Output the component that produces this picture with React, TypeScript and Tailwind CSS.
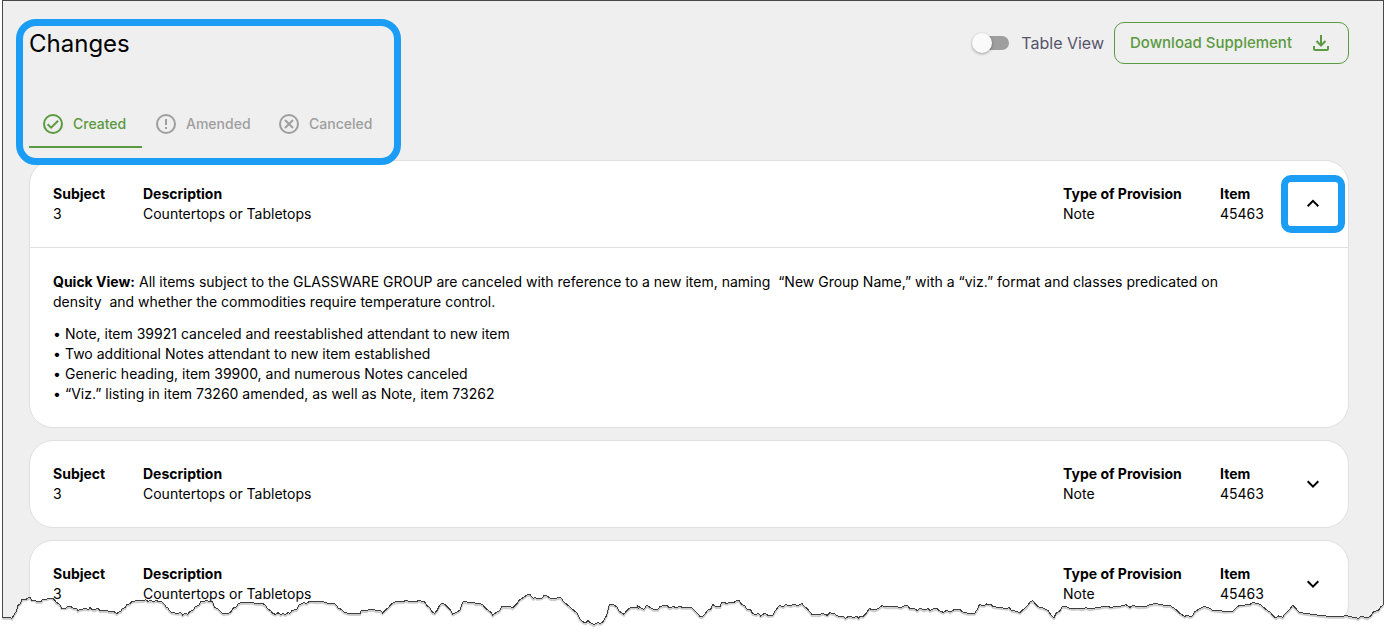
import { useState } from "react";

type Tab = "Created" | "Amended" | "Canceled";

const tabs: Tab[] = ["Created", "Amended", "Canceled"];

const bullets = [
  "Note, item 39921 canceled and reestablished attendant to new item",
  "Two additional Notes attendant to new item established",
  "Generic heading, item 39900, and numerous Notes canceled",
  "“Viz.” listing in item 73260 amended, as well as Note, item 73262",
];

const tabMarks: Record<Tab, string> = {
  Created: "M6.6 12.2l3.5 3.5 7-7",
  Amended: "M12 7v6M12 15v2",
  Canceled: "M8 8l8 8M16 8l-8 8",
};

const tabWidths: Record<Tab, string> = {
  Created: "w-[113px]",
  Amended: "w-[123px]",
  Canceled: "w-[123px]",
};

function TabIcon({ tab }: { tab: Tab }) {
  return (
    <svg viewBox="0 0 24 24" className="size-6" fill="none" stroke="currentColor" strokeWidth="2" aria-hidden="true">
      <circle cx="12" cy="12" r="9" />
      <path d={tabMarks[tab]} />
    </svg>
  );
}

function Field({ label, value, className }: { label: string; value: string; className: string }) {
  return (
    <div className={className}>
      <dt className="font-bold">{label}</dt>
      <dd>{value}</dd>
    </div>
  );
}

function Card({ initiallyOpen = false, highlighted = false }: { initiallyOpen?: boolean; highlighted?: boolean }) {
  const [open, setOpen] = useState(initiallyOpen);
  return (
    <article className="rounded-3xl border border-[#e0e0e0] bg-white text-sm leading-5 text-black">
      <div className="flex items-center py-[23px] pl-[23px]">
        <dl className="flex flex-1">
          <Field label="Subject" value="3" className="w-[90px]" />
          <Field label="Description" value="Countertops or Tabletops" className="flex-1" />
          <Field label="Type of Provision" value="Note" className="w-[157px]" />
          <Field label="Item" value="45463" className="w-[61px]" />
        </dl>
        <button
          type="button"
          aria-label={open ? "Collapse" : "Expand"}
          aria-expanded={open}
          onClick={() => setOpen(!open)}
          className={
            highlighted
              ? "-my-2.5 mr-[3px] flex h-[58px] w-16 items-center justify-center rounded-[10px] border-[7px] border-[#1b9cf5]"
              : "-my-2.5 mr-[3px] flex h-[58px] w-16 items-center justify-center rounded-[10px]"
          }
        >
          <svg viewBox="0 0 24 24" className="size-6" fill="none" stroke="currentColor" strokeWidth="2" aria-hidden="true">
            <path d={open ? "M6.7 14.2L12 8.9l5.3 5.3" : "M6.7 9.3L12 14.6l5.3-5.3"} />
          </svg>
        </button>
      </div>
      {open && (
        <div className="border-t border-[#e0e0e0] px-[23px] pt-6 pb-[23px]">
          <p className="max-w-[1200px] whitespace-pre-wrap">
            <strong>Quick View:</strong>
            {" All items subject to the GLASSWARE GROUP are canceled with reference to a new item, naming  “New Group Name,” with a “viz.” format and classes predicated on density  and whether the commodities require temperature control."}
          </p>
          <ul className="mt-3">
            {bullets.map((text) => (
              <li key={text} className="flex gap-1">
                <span className="w-2 text-center">•</span>
                {text}
              </li>
            ))}
          </ul>
        </div>
      )}
    </article>
  );
}

// Points of the torn paper edge, in thirds of a pixel, left to right.
const tear =
  "7,82 30,82 36,85 42,74 48,66 54,46 62,40 66,28 80,27 86,23 92,24 95,30 106,30 110,35 124,34 128,27 140,27 146,24 157,24 163,29 168,36 176,42 182,46 184,54 198,54 202,50 214,50 218,54 230,56 234,62 240,58 258,56 266,58 270,53 276,58 284,60 294,54 300,62 320,62 326,64 344,66 350,71 356,66 363,64 366,57 376,52 380,44 388,42 396,34 404,33 430,32 436,29 444,34 452,32 462,34 468,32 486,36 494,44 498,52 504,54 508,62 516,68 534,70 542,68 548,75 556,70 564,73 568,66 580,60 586,50 598,44 602,36 612,35 618,32 628,34 636,33 640,42 644,52 656,58 662,66 672,72 678,69 684,71 692,66 700,54 710,50 714,42 722,38 754,37 764,40 790,42 798,48 802,56 812,62 818,70 826,73 834,68 842,74 850,70 856,74 864,68 870,70 876,62 890,58 896,46 904,42 912,38 920,40 928,34 940,34 954,36 966,34 980,39 1002,40 1010,46 1014,54 1024,58 1032,66 1040,69 1050,71 " +
  "1080,71 1084,62 1100,62 1106,58 1124,60 1130,63 1142,62 1148,69 1156,60 1164,54 1174,42 1186,36 1212,34 1216,31 1228,34 1250,34 1258,31 1266,35 1274,36 1280,46 1290,54 1298,68 1304,70 1312,60 1320,44 1328,40 1336,44 1346,54 1352,60 1358,72 1374,64 1380,60 1386,42 1390,35 1410,37 1422,37 1428,42 1440,40 1448,44 1454,52 1466,62 1474,68 1478,76 1486,69 1498,63 1506,50 1532,51 1538,54 1550,42 1558,30 1574,20 1582,14 1590,14 1600,26 1606,22 1610,25 1626,24 1632,17 1642,18 1652,26 1664,27 1672,23 1684,24 1690,34 1704,46 1718,58 1732,70 1740,88 1750,96 1758,99 1764,90 1770,98 1782,104 1792,98 1802,100 1810,94 1820,76 1824,60 1828,44 1840,44 1850,50 1858,64 1872,73 1880,62 1892,52 1908,51 1914,54 1912,46 1922,54 1932,58 1940,46 1950,52 1960,58 1974,58 1980,49 2000,46 2008,54 2020,50 2030,53 2040,48 2046,52 2074,52 2086,64 2100,79 " +
  "2106,81 2112,75 2124,60 2132,58 2138,43 2148,50 2160,50 2166,36 2180,40 2190,37 2204,36 2210,31 2218,32 2224,42 2234,47 2240,57 2252,60 2258,71 2268,74 2276,70 2282,78 2294,70 2306,77 2318,76 2326,62 2338,46 2350,50 2356,44 2374,47 2380,43 2394,46 2406,41 2414,50 2424,58 2436,74 2458,75 2468,70 2482,76 2490,68 2504,72 2514,78 2530,79 2536,85 2546,79 2562,82 2570,79 2576,85 2580,78 2590,79 2600,68 2608,56 2622,60 2634,56 2646,47 2660,51 2690,50 2704,53 2714,46 2724,48 2730,56 2744,56 2752,62 2760,54 2772,60 2784,56 2790,62 2800,57 2812,56 2818,62 2830,67 2840,61 2850,66 2864,58 2880,59 2888,66 2904,70 2924,70 2932,58 2938,44 2952,47 2960,42 2974,44 2980,50 3010,54 3022,55 3028,53 3034,61 3050,64 3060,68 3070,58 3080,50 3090,36 3098,32 3108,44 3116,51 3130,54 " +
  "3144,61 3152,74 3162,83 3168,70 3180,62 3186,50 3200,50 3208,54 3220,56 3236,54 3244,57 3260,53 3268,57 3286,54 3300,52 3318,48 3332,52 3344,50 3362,48 3378,44 3390,52 3398,46 3416,51 3440,49 3450,44 3464,41 3484,43 3494,48 3510,46 3518,52 3530,60 3540,70 3554,79 3562,76 3570,80 3578,77 3584,66 3596,58 3606,52 3614,50 3628,54 3636,60 3656,62 3674,64 3700,63 3708,54 3718,46 3736,45 3750,43 3758,38 3772,40 3784,46 3798,58 3812,68 3820,78 3828,84 3836,78 3848,82 3856,70 3866,62 3878,46 3890,58 3898,67 3916,70 3950,75 3968,77 3990,79 4030,79 4040,75 4046,80 4066,82 4074,86 4084,78 4102,84 4112,78 4120,66 4136,60 4142,50 4150,46";

function TornEdge() {
  return (
    <svg
      viewBox="0 0 4161 126"
      preserveAspectRatio="none"
      className="pointer-events-none absolute bottom-0 left-0 h-[42px] w-full"
      aria-hidden="true"
    >
      <polygon points={`0,82 ${tear} 4161,46 4161,126 0,126`} fill="white" />
      <polyline points={tear} transform="translate(0 4)" fill="none" stroke="#00000033" strokeWidth="2" vectorEffect="non-scaling-stroke" />
      <polyline points={tear} fill="none" stroke="#3f3f41" strokeWidth="1" vectorEffect="non-scaling-stroke" shapeRendering="crispEdges" />
    </svg>
  );
}

export default function App() {
  const [active, setActive] = useState<Tab>("Created");
  return (
    <div className="relative bg-white pr-[3px] pl-0.5 font-['Inter',sans-serif]">
      <main className="border border-b-0 border-[#48484a] bg-[#efefef] pr-[34px] pb-1 pl-[13px]">
        <header className="flex items-start justify-between">
          <section className="relative mt-[18px] -mb-[5px] h-[146px] w-[385px] rounded-[20px] border-[7px] border-[#1b9cf5] px-1.5">
            <h1 className="mt-[3px] text-2xl leading-[30px] text-black">Changes</h1>
            <div role="tablist" className="mt-[43px] flex">
              {tabs.map((tab) => (
                <button
                  key={tab}
                  type="button"
                  role="tab"
                  aria-selected={active === tab}
                  onClick={() => setActive(tab)}
                  className={`flex h-[46px] items-center gap-2 border-b-2 pl-3 text-sm font-medium ${tabWidths[tab]} ${
                    active === tab ? "border-[#5a9a40] text-[#5a9a40]" : "border-transparent text-[#9e9e9e]"
                  }`}
                >
                  <TabIcon tab={tab} />
                  {tab}
                </button>
              ))}
            </div>
          </section>
          <div className="mt-[21px] flex items-center gap-2.5">
            <label className="flex items-center gap-3 text-base text-[#56546b]">
              <span className="relative flex h-5 w-[37px] items-center justify-end">
                <input type="checkbox" role="switch" className="peer absolute inset-0 opacity-0" />
                <span className="h-3.5 w-[34px] rounded-full bg-[#9e9e9e] peer-checked:bg-[#a9cc9a]" />
                <span className="absolute top-0 left-0 size-5 rounded-full bg-[#fafafa] shadow-[0_1px_3px_rgba(0,0,0,0.35)] peer-checked:left-[17px]" />
              </span>
              Table View
            </label>
            <button
              type="button"
              className="flex h-[42px] w-[235px] items-center justify-between rounded-[10px] border border-[#5a9a40] px-[15px] text-[15px] font-medium text-[#5a9a40]"
            >
              Download Supplement
              <svg viewBox="0 0 24 24" className="size-6" fill="none" stroke="currentColor" strokeWidth="2" aria-hidden="true">
                <path d="M12 4v10M7.5 10l4.5 4.5 4.5-4.5M5 15v3a1 1 0 0 0 1 1h12a1 1 0 0 0 1-1v-3" />
              </svg>
            </button>
          </div>
        </header>
        <div className="flex flex-col gap-3 pl-[13px]">
          <Card initiallyOpen highlighted />
          <Card />
          <Card />
        </div>
      </main>
      <TornEdge />
    </div>
  );
}
